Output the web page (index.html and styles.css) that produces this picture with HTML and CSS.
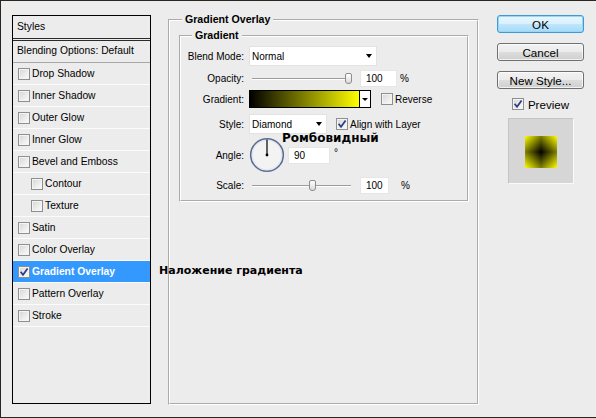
FILE: index.html
```html
<!DOCTYPE html>
<html>
<head>
<meta charset="utf-8">
<link rel="stylesheet" href="styles.css">
</head>
<body>
<div class="dialog">
  <div class="styles-panel">
    <div class="sp-head">Styles</div>
    <div class="sp-blend">Blending Options: Default</div>
    <div class="sp-row"><span class="cb"></span>Drop Shadow</div>
    <div class="sp-row"><span class="cb"></span>Inner Shadow</div>
    <div class="sp-row"><span class="cb"></span>Outer Glow</div>
    <div class="sp-row"><span class="cb"></span>Inner Glow</div>
    <div class="sp-row"><span class="cb"></span>Bevel and Emboss</div>
    <div class="sp-row sub"><span class="cb"></span>Contour</div>
    <div class="sp-row sub"><span class="cb"></span>Texture</div>
    <div class="sp-row"><span class="cb"></span>Satin</div>
    <div class="sp-row"><span class="cb"></span>Color Overlay</div>
    <div class="sp-row active"><span class="cb"><svg viewBox="0 0 10 10" width="10" height="10"><path d="M1.6 4.8 L4 7.8 L8.6 1.4" fill="none" stroke="#2b3c86" stroke-width="1.7"/></svg></span>Gradient Overlay</div>
    <div class="sp-row"><span class="cb"></span>Pattern Overlay</div>
    <div class="sp-row"><span class="cb"></span>Stroke</div>
  </div>

  <fieldset class="fs-outer">
    <legend>Gradient Overlay</legend>
    <fieldset class="fs-inner">
      <legend>Gradient</legend>
      <div class="row r-blend">
        <span class="lbl">Blend Mode:</span>
        <div class="select sel-blend"><span>Normal</span><i class="arrow"></i></div>
      </div>
      <div class="row r-opacity">
        <span class="lbl">Opacity:</span>
        <div class="slider"><div class="track"></div><div class="thumb thumb-opacity"></div></div>
        <div class="num num-wide">100</div>
        <span class="pct">%</span>
      </div>
      <div class="row r-gradient">
        <span class="lbl">Gradient:</span>
        <div class="grad"><div class="grad-fill"></div><div class="grad-btn"><i class="arrow small"></i></div></div>
        <span class="cb cb-rev"></span><span class="cb-label">Reverse</span>
      </div>
      <div class="row r-style">
        <span class="lbl">Style:</span>
        <div class="select sel-style"><span>Diamond</span><i class="arrow"></i></div>
        <span class="cb cb-align"><svg viewBox="0 0 10 10" width="10" height="10"><path d="M1.6 4.8 L4 7.8 L8.6 1.4" fill="none" stroke="#2b3c86" stroke-width="1.7"/></svg></span><span class="cb-label">Align with Layer</span>
      </div>
      <div class="row r-angle">
        <span class="lbl">Angle:</span>
        <svg class="dial" viewBox="0 0 36 36" width="36" height="36">
          <circle cx="18" cy="18" r="16.3" fill="#f3f3f3" stroke="#5d6c95" stroke-width="1.6"/>
          <circle cx="18" cy="18" r="14.8" fill="none" stroke="#dfe3ec" stroke-width="1"/>
          <line x1="18" y1="18" x2="18" y2="2.5" stroke="#000" stroke-width="1.2"/>
          <circle cx="18" cy="18" r="1.4" fill="#000"/>
        </svg>
        <div class="num num-angle">90</div>
        <span class="deg">°</span>
      </div>
      <div class="row r-scale">
        <span class="lbl">Scale:</span>
        <div class="slider"><div class="track"></div><div class="thumb thumb-scale"></div></div>
        <div class="num num-narrow">100</div>
        <span class="pct pct-far">%</span>
      </div>
    </fieldset>
  </fieldset>

  <div class="side">
    <button class="btn ok">OK</button>
    <button class="btn">Cancel</button>
    <button class="btn">New Style...</button>
    <div class="preview-check">
      <span class="cb"><svg viewBox="0 0 10 10" width="10" height="10"><path d="M1.6 4.8 L4 7.8 L8.6 1.4" fill="none" stroke="#2b3c86" stroke-width="1.7"/></svg></span><span class="pv-label">Preview</span>
    </div>
    <div class="preview-box"><div class="preview-swatch"></div></div>
  </div>

  <div class="note note-grad">Наложение градиента</div>
  <div class="note note-diamond">Ромбовидный</div>
</div>
</body>
</html>
```

FILE: styles.css
```css
html, body {
  margin: 0;
  padding: 0;
  background: #ececec;
}

body {
  font-family: "Liberation Sans", Arial, sans-serif;
  color: #000;
}

.dialog {
  position: relative;
  width: 596px;
  height: 418px;
  box-sizing: border-box;
  border-top: 1px solid #2b2520;
  border-left: 1px solid #2b2520;
  border-bottom: 1px solid #2b2520;
  background: #ececec;
  display: flex;
  align-items: flex-start;
}

/* ---------- Styles list ---------- */
.styles-panel {
  flex: none;
  width: 139px;
  height: 389px;
  margin: 14px 0 0 11px;
  box-sizing: border-box;
  border: 1px solid #000;
  font-size: 10.3px;
}

.sp-head {
  height: 22px;
  line-height: 21px;
  padding-left: 4px;
  border-bottom: 3px double #2a2a2a;
}

.sp-blend {
  height: 21px;
  line-height: 20px;
  padding-left: 4px;
  border-bottom: 1px solid #a8a8a8;
}

.sp-row {
  height: 21px;
  display: flex;
  align-items: center;
  padding-left: 5px;
  border-bottom: 1px solid #fbfbfb;
}

.sp-row.sub {
  padding-left: 18px;
}

.sp-row .cb {
  margin-right: 2px;
}

.sp-row.active {
  background: #3399ff;
  color: #fff;
  font-weight: bold;
}

/* ---------- checkbox ---------- */
.cb {
  flex: none;
  width: 12px;
  height: 12px;
  box-sizing: border-box;
  border: 1px solid #8e8f8f;
  background: linear-gradient(135deg, #d4d4d4 0%, #eeeeee 60%, #fbfbfb 100%);
  box-shadow: inset 0 0 0 1px #f4f4f4;
  display: flex;
  align-items: center;
  justify-content: center;
}

.cb svg {
  display: block;
}

/* ---------- fieldsets ---------- */
.fs-outer {
  flex: none;
  width: 311px;
  height: 392px;
  box-sizing: border-box;
  margin: 12px 0 0 17px;
  padding: 0;
  min-width: 0;
  border: 2px groove #ffffff;
}

.fs-outer > legend,
.fs-inner > legend {
  font-weight: bold;
  font-size: 10.6px;
  line-height: 13px;
  padding: 0 3px;
}

.fs-outer > legend {
  margin-left: 12px;
}

.fs-inner {
  width: 290px;
  box-sizing: border-box;
  margin: 3px 0 0 9px;
  padding: 4px 0 5px 0;
  min-width: 0;
  border: 2px groove #ffffff;
  font-size: 10px;
}

.fs-inner > legend {
  margin-left: 11px;
}

.row {
  display: flex;
  align-items: center;
  height: 20px;
}

.r-opacity { margin-top: 2px; }
.r-gradient { margin-top: 1px; }
.r-style { margin-top: 5px; }
.r-angle { margin-top: 3px; height: 36px; }
.r-scale { margin-top: 2px; }

.lbl {
  flex: none;
  width: 63px;
  margin-right: 5px;
  text-align: right;
}

/* select */
.select {
  flex: none;
  height: 20px;
  box-sizing: border-box;
  background: #fff;
  border: 1px solid #e3e3e3;
  padding: 0 4px 0 2px;
  display: flex;
  align-items: center;
  justify-content: space-between;
}

.sel-blend { width: 128px; }
.sel-style { width: 78px; }

.arrow {
  display: block;
  width: 0;
  height: 0;
  border-left: 3.5px solid transparent;
  border-right: 3.5px solid transparent;
  border-top: 4px solid #000;
}

.arrow.small {
  border-left-width: 3px;
  border-right-width: 3px;
  border-top-width: 3px;
}

/* slider */
.slider {
  flex: none;
  position: relative;
  width: 104px;
  height: 13px;
  margin-left: 3px;
}

.track {
  width: 99px;
  height: 0;
  margin-top: 6px;
  border-top: 1px solid #9c9c9c;
  border-bottom: 1px solid #ffffff;
}

.thumb {
  position: absolute;
  top: 1px;
  width: 7px;
  height: 11px;
  box-sizing: border-box;
  border: 1px solid #8c8c8c;
  border-radius: 2px 2px 3px 3px;
  background: linear-gradient(#ffffff, #dadada);
}

.thumb-opacity { left: 93px; }
.thumb-scale { left: 57px; }

/* numeric fields */
.num {
  flex: none;
  height: 17px;
  line-height: 15px;
  box-sizing: border-box;
  background: #fff;
  border: 1px solid #e6e6e6;
  padding-left: 5px;
}

.num-wide { width: 37px; margin-left: 4px; }
.num-narrow { width: 29px; margin-left: 4px; }
.num-angle { width: 42px; margin-left: 3px; }

.pct { margin-left: 3px; }
.pct-far { margin-left: 12px; }

.deg {
  margin-left: 4px;
  align-self: flex-start;
  margin-top: 10px;
}

/* gradient swatch */
.grad {
  flex: none;
  display: flex;
  width: 122px;
  height: 18px;
  box-sizing: border-box;
  border: 1px solid #000;
}

.grad-fill {
  flex: 1;
  background: linear-gradient(to right, #000000, #ffff00);
}

.grad-btn {
  flex: none;
  width: 11px;
  box-sizing: border-box;
  border-left: 1px solid #000;
  background: #fff;
  display: flex;
  align-items: center;
  justify-content: center;
}

.cb-rev { margin-left: 10px; }
.cb-align { margin-left: 9px; }

.cb-label {
  margin-left: 2px;
}

.dial {
  flex: none;
  display: block;
}

/* ---------- right column ---------- */
.side {
  flex: none;
  width: 87px;
  margin: 14px 0 0 18px;
  display: flex;
  flex-direction: column;
  align-items: center;
}

.btn {
  width: 87px;
  height: 18px;
  margin: 0 0 10px 0;
  padding: 0;
  box-sizing: border-box;
  font-family: "Liberation Sans", Arial, sans-serif;
  font-size: 11.6px;
  color: #000;
  border: 1px solid #707070;
  border-radius: 3px;
  background: linear-gradient(#f2f2f2 0%, #ebebeb 50%, #dddddd 51%, #cfcfcf 100%);
  box-shadow: inset 0 0 0 1px rgba(255,255,255,0.7);
}

.btn.ok {
  border-color: #3c9ad4;
  background: linear-gradient(#eaf6fd 0%, #d9f0fc 50%, #bee6fd 51%, #a7d9f5 100%);
  box-shadow: inset 0 0 0 1px #9ad6f5;
}

.preview-check {
  display: flex;
  align-items: center;
  height: 12px;
  margin-top: -1px;
  font-size: 11.6px;
}

.pv-label {
  margin-left: 4px;
}

.preview-box {
  width: 66px;
  height: 66px;
  margin-top: 8px;
  box-sizing: border-box;
  border: 1px solid;
  border-color: #c4c4c4 #fafafa #fafafa #c4c4c4;
  background: #d6d6d6;
  display: flex;
  align-items: center;
  justify-content: center;
}

.preview-swatch {
  width: 32px;
  height: 32px;
  margin-top: 1px;
  background:
    linear-gradient(to top left, #000 0%, #ffff00 100%) left top / 50% 50% no-repeat,
    linear-gradient(to top right, #000 0%, #ffff00 100%) right top / 50% 50% no-repeat,
    linear-gradient(to bottom left, #000 0%, #ffff00 100%) left bottom / 50% 50% no-repeat,
    linear-gradient(to bottom right, #000 0%, #ffff00 100%) right bottom / 50% 50% no-repeat;
}

/* ---------- annotations ---------- */
.note {
  position: absolute;
  font-family: "DejaVu Sans", Verdana, sans-serif;
  font-weight: bold;
  color: #000;
  white-space: nowrap;
  line-height: 14px;
}

.note-grad {
  left: 158px;
  top: 263px;
  font-size: 11px;
}

.note-diamond {
  left: 281px;
  top: 130px;
  font-size: 12px;
}
```
